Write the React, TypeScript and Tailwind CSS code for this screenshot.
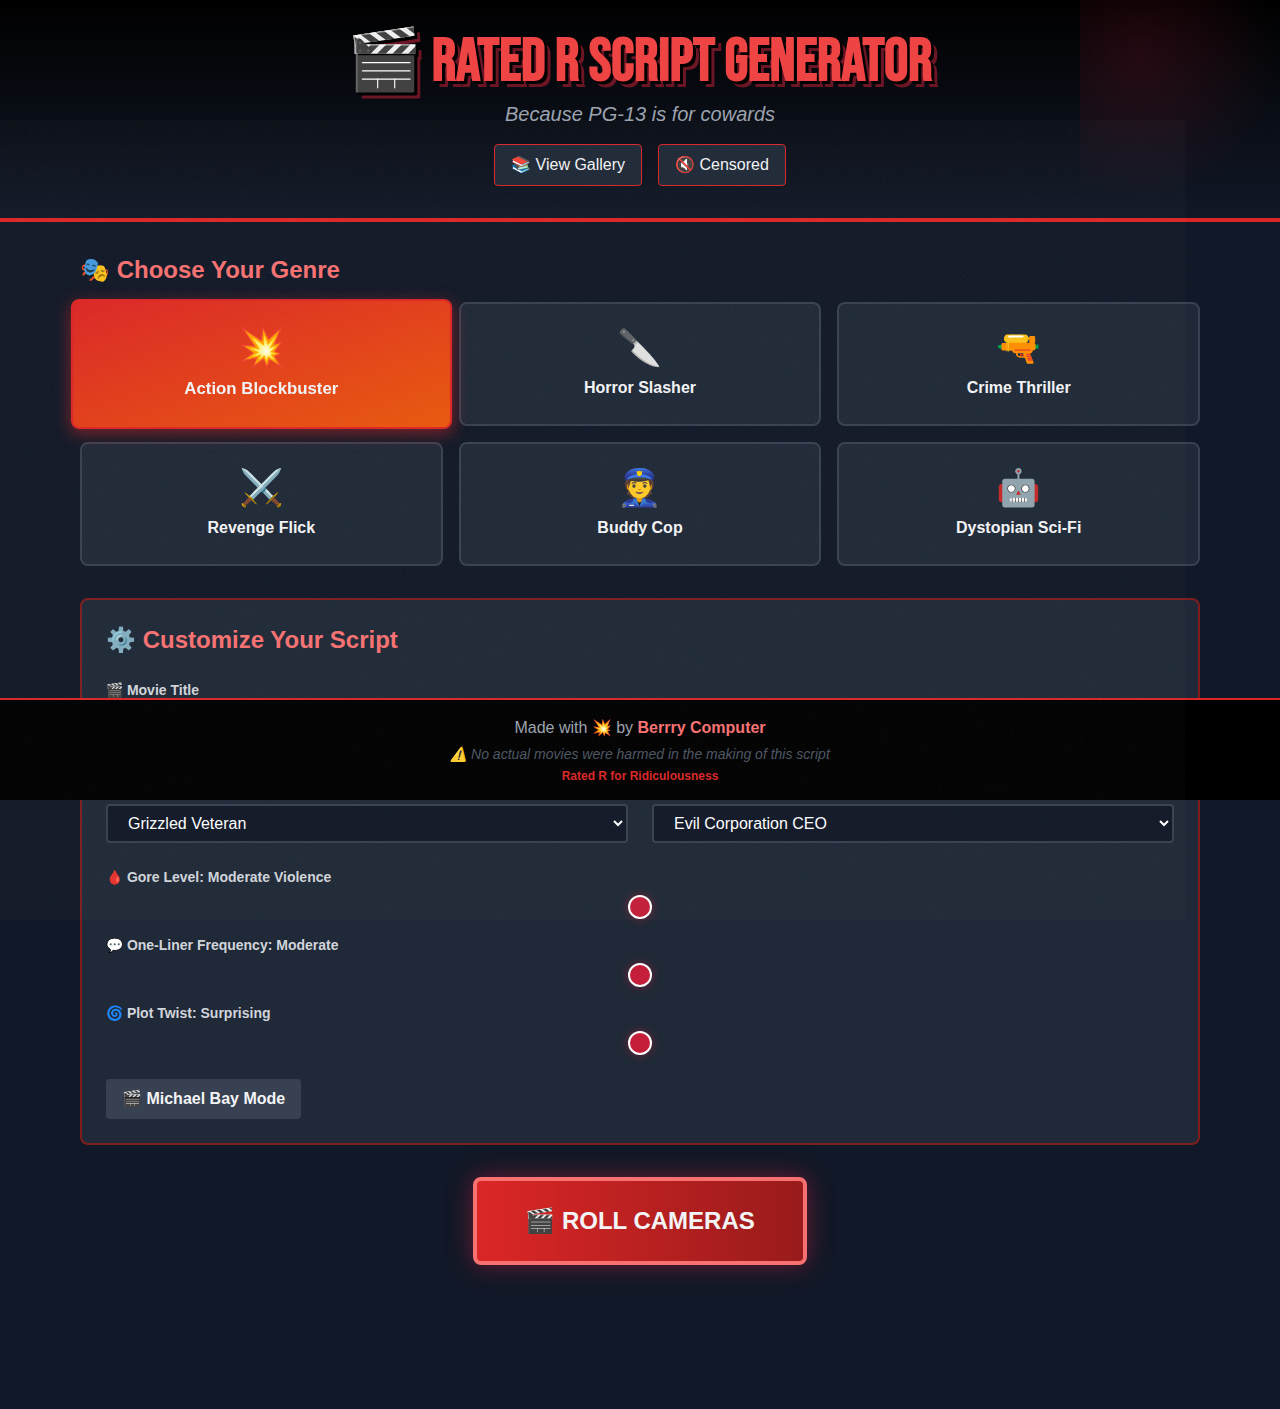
import { useState } from 'react';
import clsx from 'clsx';

const GENRES = [
  { id: 'action', emoji: '💥', name: 'Action Blockbuster' },
  { id: 'horror', emoji: '🔪', name: 'Horror Slasher' },
  { id: 'crime', emoji: '🔫', name: 'Crime Thriller' },
  { id: 'revenge', emoji: '⚔️', name: 'Revenge Flick' },
  { id: 'buddy', emoji: '👮', name: 'Buddy Cop' },
  { id: 'scifi', emoji: '🤖', name: 'Dystopian Sci-Fi' },
];

const HEROES = ['Grizzled Veteran', 'Rookie with a Grudge', 'Retired Assassin'];
const VILLAINS = ['Evil Corporation CEO', 'Masked Killer', 'Rogue General'];

const GORE = ['Mild Violence', 'Moderate Violence', 'Extreme Violence'];
const ONE_LINERS = ['Rare', 'Moderate', 'Constant'];
const TWISTS = ['Predictable', 'Surprising', 'Mind-Bending'];

const FIELD = 'block w-full rounded border-2 border-[#374151] bg-[#111827] px-4 py-2 text-base text-white';
const LABEL = 'mb-2 block text-sm font-bold text-[#d1d5db]';

function Slider({ id, label, levels }: { id: string; label: string; levels: string[] }) {
  const [value, setValue] = useState(1);

  return (
    <div>
      <label htmlFor={id} className={LABEL}>{label}: {levels[value]}</label>
      <input
        id={id}
        type="range"
        min={0}
        max={levels.length - 1}
        value={value}
        onChange={(e) => setValue(Number(e.target.value))}
        className="block h-6 w-full cursor-pointer appearance-none bg-transparent [&::-webkit-slider-thumb]:h-6 [&::-webkit-slider-thumb]:w-6 [&::-webkit-slider-thumb]:appearance-none [&::-webkit-slider-thumb]:rounded-full [&::-webkit-slider-thumb]:border-2 [&::-webkit-slider-thumb]:border-solid [&::-webkit-slider-thumb]:border-white [&::-webkit-slider-thumb]:bg-[#c41e3a] [&::-webkit-slider-thumb]:shadow-[0_0_10px_rgba(196,30,58,0.5)]"
      />
    </div>
  );
}

function Header() {
  const [censored, setCensored] = useState(true);
  const button = 'rounded border border-[#dc2626] bg-[#1f2937] px-4 py-2 text-base text-[#f3f4f6]';

  return (
    <header className="border-b-4 border-[#dc2626] bg-[linear-gradient(to_bottom,#000,#111827)] py-8 text-center">
      <h1 className="mb-2 font-['Bebas_Neue','Liberation_Sans',sans-serif] text-6xl leading-none font-bold text-[#ef4444] [text-shadow:3px_3px_0_#000,6px_6px_0_#6b1525]">
        🎬 RATED R SCRIPT GENERATOR
      </h1>
      <p className="mb-4 text-xl italic text-[#9ca3af]">Because PG-13 is for cowards</p>
      <div className="flex justify-center gap-4">
        <button type="button" className={button}>📚 View Gallery</button>
        <button type="button" className={button} onClick={() => setCensored(!censored)}>
          {censored ? '🔇 Censored' : '🔊 Uncensored'}
        </button>
      </div>
    </header>
  );
}

function GenrePicker() {
  const [genre, setGenre] = useState('action');

  return (
    <section className="mb-8">
      <h2 className="mb-4 text-2xl font-bold text-[#f87171]">🎭 Choose Your Genre</h2>
      <div className="grid grid-cols-3 gap-4">
        {GENRES.map((g) => (
          <button
            key={g.id}
            type="button"
            aria-pressed={genre === g.id}
            onClick={() => setGenre(g.id)}
            className={clsx(
              'rounded-lg border-2 p-6 text-center',
              genre === g.id
                ? 'scale-105 border-[#dc2626] bg-[linear-gradient(to_bottom_right,#dc2626,#ea580c)] shadow-[0_4px_15px_rgba(220,38,38,0.5)]'
                : 'border-[#374151] bg-[#1f2937]',
            )}
          >
            <div className="mb-2 text-4xl">{g.emoji}</div>
            <div className="text-base font-bold text-[#f3f4f6]">{g.name}</div>
          </button>
        ))}
      </div>
    </section>
  );
}

function Customize() {
  return (
    <section className="mb-8 rounded-lg border-2 border-[#7f1d1d] bg-[#1f2937] p-6">
      <h2 className="mb-6 text-2xl font-bold text-[#f87171]">⚙️ Customize Your Script</h2>

      <div className="mb-13">
        <label htmlFor="title" className={LABEL}>🎬 Movie Title</label>
        <input id="title" type="text" className={FIELD} />
      </div>

      <div className="mb-6 grid grid-cols-2 gap-6">
        <select aria-label="Hero" className={FIELD}>
          {HEROES.map((h) => <option key={h}>{h}</option>)}
        </select>
        <select aria-label="Villain" className={FIELD}>
          {VILLAINS.map((v) => <option key={v}>{v}</option>)}
        </select>
      </div>

      <div className="mb-6 flex flex-col gap-4">
        <Slider id="gore" label="🩸 Gore Level" levels={GORE} />
        <Slider id="liners" label="💬 One-Liner Frequency" levels={ONE_LINERS} />
        <Slider id="twist" label="🌀 Plot Twist" levels={TWISTS} />
      </div>

      <button type="button" className="block rounded bg-[#374151] px-4 py-2 text-base font-bold text-[#f3f4f6]">
        🎬 Michael Bay Mode
      </button>
    </section>
  );
}

function Footer() {
  return (
    <footer className="absolute inset-x-0 top-[698px] border-t-2 border-[#dc2626] bg-black p-4 text-center">
      <p className="text-base text-[#9ca3af]">
        Made with 💥 by <a href="#" className="font-bold text-[#f87171]">Berrry Computer</a>
      </p>
      <p className="mt-1 text-sm italic text-[#4b5563]">⚠️ No actual movies were harmed in the making of this script</p>
      <p className="mt-1 text-xs font-bold text-[#dc2626]">Rated R for Ridiculousness</p>
    </footer>
  );
}

export default function App() {
  return (
    <div className="relative min-h-screen overflow-hidden bg-[#111827] font-['Liberation_Sans',sans-serif] text-white">
      <Header />

      <main className="mx-auto max-w-6xl px-4 py-8">
        <GenrePicker />
        <Customize />
        <div className="text-center">
          <button
            type="button"
            className="rounded-lg border-4 border-[#f87171] bg-[linear-gradient(to_right,#dc2626,#991b1b)] px-12 py-6 text-2xl font-bold text-[#f3f4f6] shadow-[0_0_24px_rgba(196,30,58,0.5)]"
          >
            🎬 ROLL CAMERAS
          </button>
        </div>
      </main>

      <Footer />

      {/* Projector glow in the corner */}
      <div className="pointer-events-none absolute top-0 right-0 h-50 w-50 bg-[radial-gradient(circle_at_30%_30%,rgba(196,30,58,0.17)_0%,transparent_70%)]" />

      {/* Film grain */}
      <svg aria-hidden="true" className="pointer-events-none absolute top-30 left-0 h-[800px] w-[calc(100%-95px)] opacity-5">
        <filter id="grain">
          <feTurbulence type="fractalNoise" baseFrequency="0.9" numOctaves="4" stitchTiles="stitch" />
        </filter>
        <rect width="100%" height="100%" filter="url(#grain)" />
      </svg>
    </div>
  );
}
